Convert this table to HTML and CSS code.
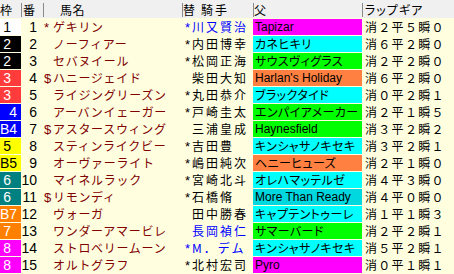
FILE: index.html
```html
<!DOCTYPE html>
<html lang="ja">
<head>
<meta charset="utf-8">
<title>出馬表</title>
<link rel="stylesheet" href="styles.css">
</head>
<body>
<div class="table">
  <div class="hd hd-waku">枠</div>
  <div class="hd hd-ban sep">番</div>
  <div class="hd hd-name sep">馬名</div>
  <div class="hd hd-jockey sep"><span class="kae">替</span>騎手</div>
  <div class="hd hd-sire sep">父</div>
  <div class="hd hd-lap sep">ラップギア</div>

  <div class="waku w1">1</div><div class="ban">1</div><div class="name"><span class="pre">*</span>ゲキリン</div><div class="jockey blue"><span class="pre">*</span>川又賢治</div><div class="sire c-mag">Tapizar</div><div class="lap">消２平５瞬０</div>
  <div class="waku w2">2</div><div class="ban">2</div><div class="name"><span class="pre"></span>ノーフィアー</div><div class="jockey"><span class="pre">*</span>内田博幸</div><div class="sire c-cyan kana">カネヒキリ</div><div class="lap">消６平２瞬０</div>
  <div class="waku w2">2</div><div class="ban">3</div><div class="name"><span class="pre"></span>セバヌイール</div><div class="jockey"><span class="pre">*</span>松岡正海</div><div class="sire c-green kana">サウスヴィグラス</div><div class="lap">消２平２瞬０</div>
  <div class="waku w3">3</div><div class="ban">4</div><div class="name"><span class="pre">$</span>ハニージェイド</div><div class="jockey"><span class="pre"></span>柴田大知</div><div class="sire c-orange">Harlan's Holiday</div><div class="lap">消６平２瞬０</div>
  <div class="waku w3">3</div><div class="ban">5</div><div class="name"><span class="pre"></span>ライジングリーズン</div><div class="jockey"><span class="pre">*</span>丸田恭介</div><div class="sire c-cyan kana">ブラックタイド</div><div class="lap">消０平２瞬１</div>
  <div class="waku w4">4</div><div class="ban">6</div><div class="name"><span class="pre"></span>アーバンイェーガー</div><div class="jockey"><span class="pre">*</span>戸崎圭太</div><div class="sire c-green kana">エンパイアメーカー</div><div class="lap">消２平１瞬５</div>
  <div class="waku w4">B4</div><div class="ban">7</div><div class="name"><span class="pre">$</span>アスタースウィング</div><div class="jockey"><span class="pre"></span>三浦皇成</div><div class="sire c-green">Haynesfield</div><div class="lap">消３平２瞬２</div>
  <div class="waku w5">5</div><div class="ban">8</div><div class="name"><span class="pre"></span>スティンライクビー</div><div class="jockey"><span class="pre">*</span>吉田豊</div><div class="sire c-cyan kana">キンシャサノキセキ</div><div class="lap">消３平２瞬１</div>
  <div class="waku w5">B5</div><div class="ban">9</div><div class="name"><span class="pre"></span>オーヴァーライト</div><div class="jockey"><span class="pre">*</span>嶋田純次</div><div class="sire c-orange kana">ヘニーヒューズ</div><div class="lap">消２平１瞬０</div>
  <div class="waku w6">6</div><div class="ban">10</div><div class="name"><span class="pre"></span>マイネルラック</div><div class="jockey"><span class="pre">*</span>宮崎北斗</div><div class="sire c-cyan kana">オレハマッテルゼ</div><div class="lap">消４平３瞬０</div>
  <div class="waku w6">6</div><div class="ban">11</div><div class="name"><span class="pre">$</span>リモンディ</div><div class="jockey"><span class="pre">*</span>石橋脩</div><div class="sire c-turq">More Than Ready</div><div class="lap">消４平０瞬０</div>
  <div class="waku w7">B7</div><div class="ban">12</div><div class="name"><span class="pre"></span>ヴォーガ</div><div class="jockey"><span class="pre"></span>田中勝春</div><div class="sire c-cyan kana">キャプテントゥーレ</div><div class="lap">消１平１瞬３</div>
  <div class="waku w7">7</div><div class="ban">13</div><div class="name"><span class="pre"></span>ワンダーアマービレ</div><div class="jockey blue"><span class="pre"></span>長岡禎仁</div><div class="sire c-green kana">サマーバード</div><div class="lap">消２平２瞬１</div>
  <div class="waku w8">8</div><div class="ban">14</div><div class="name"><span class="pre"></span>ストロベリームーン</div><div class="jockey blue"><span class="pre">*</span>M．デム</div><div class="sire c-cyan kana">キンシャサノキセキ</div><div class="lap">消５平２瞬１</div>
  <div class="waku w8">8</div><div class="ban">15</div><div class="name"><span class="pre"></span>オルトグラフ</div><div class="jockey"><span class="pre">*</span>北村宏司</div><div class="sire c-mag">Pyro</div><div class="lap">消０平１瞬１</div>
</div>
</body>
</html>
```

FILE: styles.css
```css
* {
  box-sizing: border-box;
  margin: 0;
  padding: 0;
}

body {
  margin: 0;
  width: 454px;
  height: 274px;
  overflow: hidden;
  background: #ffffe0;
  color: #000;
  font-family: "Liberation Sans", "Noto Sans CJK JP", sans-serif;
  font-size: 13px;
}

.table {
  display: grid;
  grid-template-columns: 21px 22px 139px 71px 109px 92px;
  grid-template-rows: 18px;
  grid-auto-rows: 16px;
  row-gap: 1px;
}

.table > div {
  white-space: nowrap;
  line-height: 16px;
}

/* header */
.table > .hd {
  background: #f0f0f0;
  line-height: 20px;
  font-family: "Noto Sans CJK JP", sans-serif;
  font-size: 12px;
}

.table > .sep {
  background: linear-gradient(#8a8a8a, #8a8a8a) 0 3px / 1px 14px no-repeat, #f0f0f0;
}

.hd-waku { padding-left: 0; }
.hd-ban { padding-left: 2px; }
.hd-name { padding-left: 17px; letter-spacing: 0.5px; }
.hd-jockey { padding-left: 1px; letter-spacing: 2px; }
.hd-jockey .kae { margin-right: 4px; }
.hd-sire { padding-left: 1px; }
.hd-lap { padding-left: 3px; font-feature-settings: "palt"; letter-spacing: 1px; }

/* frame number */
.waku {
  text-align: right;
  padding-right: 10px;
  color: #fff;
  font-size: 14px;
}
.w1 { background: #ffffff; color: #000; }
.w2 { background: #000000; }
.w3 { background: #ff3b3b; }
.w4 { background: #0000ff; padding-right: 4px; }
.w5 { background: #ffff00; color: #000; }
.w6 { background: #008080; }
.w7 { background: #ff8000; }
.w8 { background: #ff00ff; }

/* horse number */
.ban {
  text-align: right;
  padding-right: 6px;
  font-size: 14px;
}

/* horse name */
.name {
  padding-left: 1px;
  color: #800000;
  font-family: "Noto Sans CJK JP", sans-serif;
  font-size: 12px;
  letter-spacing: 0.7px;
}
.name .pre {
  display: inline-block;
  width: 9px;
  font-family: "Liberation Sans", sans-serif;
  font-size: 13px;
  letter-spacing: 0;
}

/* jockey */
.jockey {
  padding-left: 3px;
  font-family: "Noto Sans CJK JP", sans-serif;
  font-size: 12px;
  letter-spacing: 2px;
}
.jockey .pre {
  display: inline-block;
  width: 7px;
  font-family: "Liberation Sans", sans-serif;
  font-size: 13px;
  letter-spacing: 0;
}
.jockey.blue { color: #0000ff; }

/* sire */
.table > .sire {
  padding-left: 2px;
  font-size: 12px;
}
.table > .sire.kana {
  font-family: "Noto Sans CJK JP", sans-serif;
  font-feature-settings: "palt";
  letter-spacing: 0.4px;
}
.c-mag { background: #ff00ff; }
.c-cyan { background: #00ffff; }
.c-turq { background: #00d8e0; }
.c-green { background: #00ff00; }
.c-orange { background: #ff8040; }

/* lap gear */
.lap {
  padding-left: 3px;
  font-family: "Noto Sans CJK JP", sans-serif;
  font-size: 12px;
  letter-spacing: 1.3px;
}
```
